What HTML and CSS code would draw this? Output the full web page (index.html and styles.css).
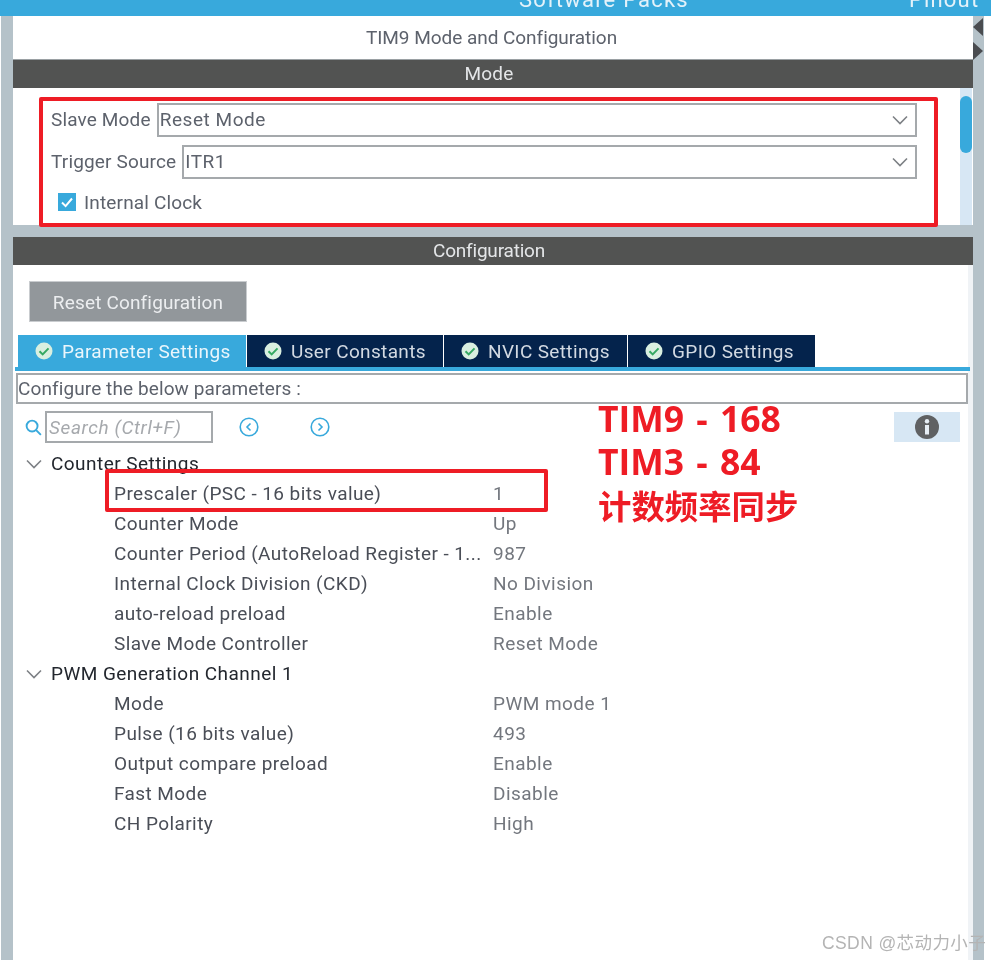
FILE: index.html
```html
<!DOCTYPE html>
<html lang="en">
<head>
<meta charset="utf-8">
<title>TIM9 Mode and Configuration</title>
<link rel="stylesheet" href="styles.css">
</head>
<body>
<header class="topbar">
  <span class="top-packs">Software Packs</span>
  <span class="top-pinout">Pinout</span>
</header>
<div class="frame">
  <main class="panel">
    <h1 class="title">TIM9 Mode and Configuration</h1>
    <div class="band">Mode</div>
    <section class="mode">
      <div class="mode-fields">
        <div class="field field-slave">
          <label class="field-label">Slave Mode</label>
          <div class="select">Reset Mode
            <svg class="chev" viewBox="0 0 16 10"><path d="M1 1.5l7 7 7-7"/></svg>
          </div>
        </div>
        <div class="field field-trigger">
          <label class="field-label">Trigger Source</label>
          <div class="select">ITR1
            <svg class="chev" viewBox="0 0 16 10"><path d="M1 1.5l7 7 7-7"/></svg>
          </div>
        </div>
        <div class="check-row">
          <svg class="check" viewBox="0 0 18 18"><rect width="18" height="18" fill="#38a9dc"/><path d="M4 9.5l3.6 3.6L14 5.5" fill="none" stroke="#fff" stroke-width="2"/></svg>
          <span>Internal Clock</span>
        </div>
      </div>
      <div class="scroll"><div class="thumb"></div></div>
    </section>
    <div class="gap"></div>
    <div class="band band-config">Configuration</div>
    <section class="config">
      <div class="reset-btn">Reset Configuration</div>
      <nav class="tabs">
        <div class="tab tab-active tab-1"><svg class="ok" viewBox="0 0 18 18"><circle cx="9" cy="9" r="8.5" fill="#d9efe0"/><path d="M4.5 9.2l3.2 3.2 5.8-6" fill="none" stroke="#35a862" stroke-width="2"/></svg>Parameter Settings</div>
        <div class="tab tab-2"><svg class="ok" viewBox="0 0 18 18"><circle cx="9" cy="9" r="8.5" fill="#d9efe0"/><path d="M4.5 9.2l3.2 3.2 5.8-6" fill="none" stroke="#35a862" stroke-width="2"/></svg>User Constants</div>
        <div class="tab tab-3"><svg class="ok" viewBox="0 0 18 18"><circle cx="9" cy="9" r="8.5" fill="#d9efe0"/><path d="M4.5 9.2l3.2 3.2 5.8-6" fill="none" stroke="#35a862" stroke-width="2"/></svg>NVIC Settings</div>
        <div class="tab tab-4"><svg class="ok" viewBox="0 0 18 18"><circle cx="9" cy="9" r="8.5" fill="#d9efe0"/><path d="M4.5 9.2l3.2 3.2 5.8-6" fill="none" stroke="#35a862" stroke-width="2"/></svg>GPIO Settings</div>
      </nav>
      <div class="tab-rule"></div>
      <div class="hint">Configure the below parameters :</div>
      <div class="search-row">
        <svg class="search-icon" viewBox="0 0 18 18"><circle cx="7.5" cy="7.5" r="5.8" fill="none" stroke="#38a9dc" stroke-width="2"/><path d="M11.8 11.8l5 5" stroke="#38a9dc" stroke-width="2"/></svg>
        <div class="search-input">Search (Ctrl+F)</div>
        <svg class="nav nav-prev" viewBox="0 0 20 20"><circle cx="10" cy="10" r="8.8" fill="none" stroke="#38a9dc" stroke-width="1.6"/><path d="M11.5 6.5L8 10l3.5 3.5" fill="none" stroke="#38a9dc" stroke-width="1.6"/></svg>
        <svg class="nav nav-next" viewBox="0 0 20 20"><circle cx="10" cy="10" r="8.8" fill="none" stroke="#38a9dc" stroke-width="1.6"/><path d="M8.5 6.5L12 10l-3.5 3.5" fill="none" stroke="#38a9dc" stroke-width="1.6"/></svg>
        <div class="info"><svg viewBox="0 0 24 24"><circle cx="12" cy="12" r="12" fill="#5f6163"/><rect x="10" y="10" width="4" height="9.5" fill="#e6eef5"/><circle cx="12" cy="6.3" r="2.2" fill="#e6eef5"/></svg></div>
      </div>
      <div class="tree">
        <div class="group"><svg class="tree-chev" viewBox="0 0 16 10"><path d="M1 1.5l7 7 7-7"/></svg>Counter Settings</div>
        <div class="row"><span>Prescaler (PSC - 16 bits value)</span><span class="val">1</span></div>
        <div class="row"><span>Counter Mode</span><span class="val">Up</span></div>
        <div class="row"><span>Counter Period (AutoReload Register - 1...</span><span class="val">987</span></div>
        <div class="row"><span>Internal Clock Division (CKD)</span><span class="val">No Division</span></div>
        <div class="row"><span>auto-reload preload</span><span class="val">Enable</span></div>
        <div class="row"><span>Slave Mode Controller</span><span class="val">Reset Mode</span></div>
        <div class="group"><svg class="tree-chev" viewBox="0 0 16 10"><path d="M1 1.5l7 7 7-7"/></svg>PWM Generation Channel 1</div>
        <div class="row"><span>Mode</span><span class="val">PWM mode 1</span></div>
        <div class="row"><span>Pulse (16 bits value)</span><span class="val">493</span></div>
        <div class="row"><span>Output compare preload</span><span class="val">Enable</span></div>
        <div class="row"><span>Fast Mode</span><span class="val">Disable</span></div>
        <div class="row"><span>CH Polarity</span><span class="val">High</span></div>
      </div>
    </section>
  </main>
  <aside class="side">
    <svg class="arrow" viewBox="0 0 10 18"><path d="M10 0v18L0 9z"/></svg>
    <svg class="arrow" viewBox="0 0 10 18"><path d="M0 0v18l10-9z"/></svg>
  </aside>
</div>
<div class="mark mark-mode"></div>
<div class="mark mark-psc"></div>
<div class="note">
  <div class="note-line">TIM9 - 168</div>
  <div class="note-line">TIM3 - 84</div>
  <div class="note-cn">计数频率同步</div>
</div>
<div class="watermark">CSDN @芯动力小子</div>
</body>
</html>
```
FILE: styles.css
```css
* { box-sizing: border-box; }
html, body { margin: 0; height: 960px; overflow: hidden; background: #fff; }
body { font-family: Roboto, "Liberation Sans", sans-serif; font-size: 19px; color: #5d626c; letter-spacing: 0.15px; position: relative; filter: blur(0.4px); }

.topbar { height: 16px; background: #38a9dc; color: #e4f2fa; position: relative; overflow: hidden; display: flex; font-size: 22px; line-height: 24px; }
.top-packs { margin: -12px 0 0 519px; letter-spacing: 1.2px; }
.top-pinout { margin: -12px 0 0 220px; letter-spacing: 1.2px; }

.frame { display: flex; height: 944px; margin-left: 1px; width: 983px; background: #b5c2c9; padding-left: 12px; }
.panel { width: 960px; background: #fff; display: flex; flex-direction: column; }
.side { width: 11px; display: flex; flex-direction: column; padding-top: 2px; }
.arrow { width: 10px; height: 18px; fill: #4a4c50; margin-bottom: 6px; }

.title { margin: 0; height: 43px; font-size: 19px; font-weight: 400; line-height: 44px; text-align: center; letter-spacing: -0.04px; color: #5d626c; padding-right: 3px; }
.band { height: 29px; background: #525352; color: #e4e6e8; text-align: center; line-height: 28px; font-size: 19px; letter-spacing: 0.2px; border-top: 1px solid #9aa0a3; padding-right: 8px; }
.band-config { height: 28px; border-top: 0; line-height: 28px; letter-spacing: -0.2px; }

.mode { height: 137px; display: flex; position: relative; }
.mode-fields { flex: 1; padding: 15px 43px 0 38px; }
.field { display: flex; height: 34px; margin-bottom: 8px; line-height: 33px; }
.field-label { white-space: nowrap; margin-right: 6px; }
.select { flex: 1; border: 2px solid #a5a9ac; color: #5d626c; padding-left: 1px; position: relative; letter-spacing: 0.55px; line-height: 29px; }
.chev { position: absolute; right: 7px; top: 10px; width: 16px; height: 10px; fill: none; stroke: #7d8185; stroke-width: 1.6; }
.check-row { display: flex; align-items: center; height: 26px; margin-top: 10px; padding-left: 7px; }
.check { width: 18px; height: 18px; margin-right: 8px; }
.scroll { width: 12px; margin-right: 1px; background: #d7e7f4; }
.thumb { height: 57px; margin-top: 8px; background: #38a9dc; border-radius: 6px; }

.gap { height: 12px; background: #b5c2c9; }

.config { flex: 1; position: relative; border-right: 5px solid #f0f3f6; }
.reset-btn { margin: 16px 0 0 16px; width: 218px; height: 41px; background: #92979b; color: #eceef0; text-align: center; line-height: 41px; letter-spacing: 0.16px; border: 1px solid #c9cccf; }
.tabs { display: flex; height: 32px; margin: 13px 0 0 5px; gap: 1px; }
.tab { background: #04234c; color: #d3dae3; display: flex; align-items: center; padding-left: 17px; letter-spacing: 0.36px; white-space: nowrap; }
.tab-active { background: #38a9dc; color: #eaf6fc; }
.tab-1 { width: 228px; }
.tab-2 { width: 196px; }
.tab-3 { width: 183px; }
.tab-4 { width: 187px; }
.ok { width: 18px; height: 18px; margin-right: 9px; flex: none; }
.tab-rule { height: 4px; background: #38a9dc; margin-left: 2px; margin-right: -2px; }
.hint { height: 31px; margin: 2px 0 0 3px; width: 952px; border: 2px solid #a5a9ac; line-height: 28px; letter-spacing: 0.1px; }
.search-row { display: flex; align-items: center; height: 32px; margin-top: 7px; padding-left: 12px; position: relative; }
.search-icon { width: 17px; height: 17px; margin-right: 3px; }
.search-input { width: 168px; height: 32px; border: 2px solid #a5a9ac; font-style: italic; color: #a6a9ad; line-height: 29px; padding-left: 2px; letter-spacing: 0.6px; white-space: nowrap; }
.nav { width: 20px; height: 20px; }
.nav-prev { margin-left: 26px; }
.nav-next { margin-left: 51px; }
.info { position: absolute; left: 881px; top: 1px; width: 66px; height: 30px; background: #d7e7f4; display: flex; align-items: center; justify-content: center; }
.info svg { width: 24px; height: 24px; }

.tree { margin-top: 6px; }
.group { height: 30px; line-height: 30px; color: #23272e; display: flex; align-items: center; padding-left: 13px; letter-spacing: 0.45px; }
.tree-chev { width: 16px; height: 10px; margin-right: 9px; fill: none; stroke: #7d8185; stroke-width: 1.6; }
.row { height: 30px; line-height: 30px; display: grid; grid-template-columns: 379px 1fr; padding-left: 101px; color: #4a4e57; white-space: nowrap; }
.row span:first-child { letter-spacing: 0.42px; }
.val { color: #73777e; letter-spacing: 0.45px; }

.mark { position: absolute; border: 4px solid #ee1c25; border-radius: 2px; }
.mark-mode { left: 39px; top: 97px; width: 899px; height: 130px; }
.mark-psc { left: 105px; top: 469px; width: 443px; height: 43px; }

.note { position: absolute; left: 598px; top: 397px; color: #ee1c25; font-family: "Open Sans", "Noto Sans", sans-serif; font-weight: 700; letter-spacing: 0; }
.note-line { font-size: 35.5px; line-height: 43px; white-space: nowrap; word-spacing: 3px; }
.note-cn { font-family: "Noto Sans CJK SC", sans-serif; font-size: 33.4px; line-height: 44px; white-space: nowrap; }

.watermark { position: absolute; left: 822px; top: 931px; font-family: "Liberation Sans", "Noto Sans CJK SC", sans-serif; font-size: 17.5px; line-height: 24px; color: #b4b4b4; letter-spacing: 0.4px; white-space: nowrap; }
```
